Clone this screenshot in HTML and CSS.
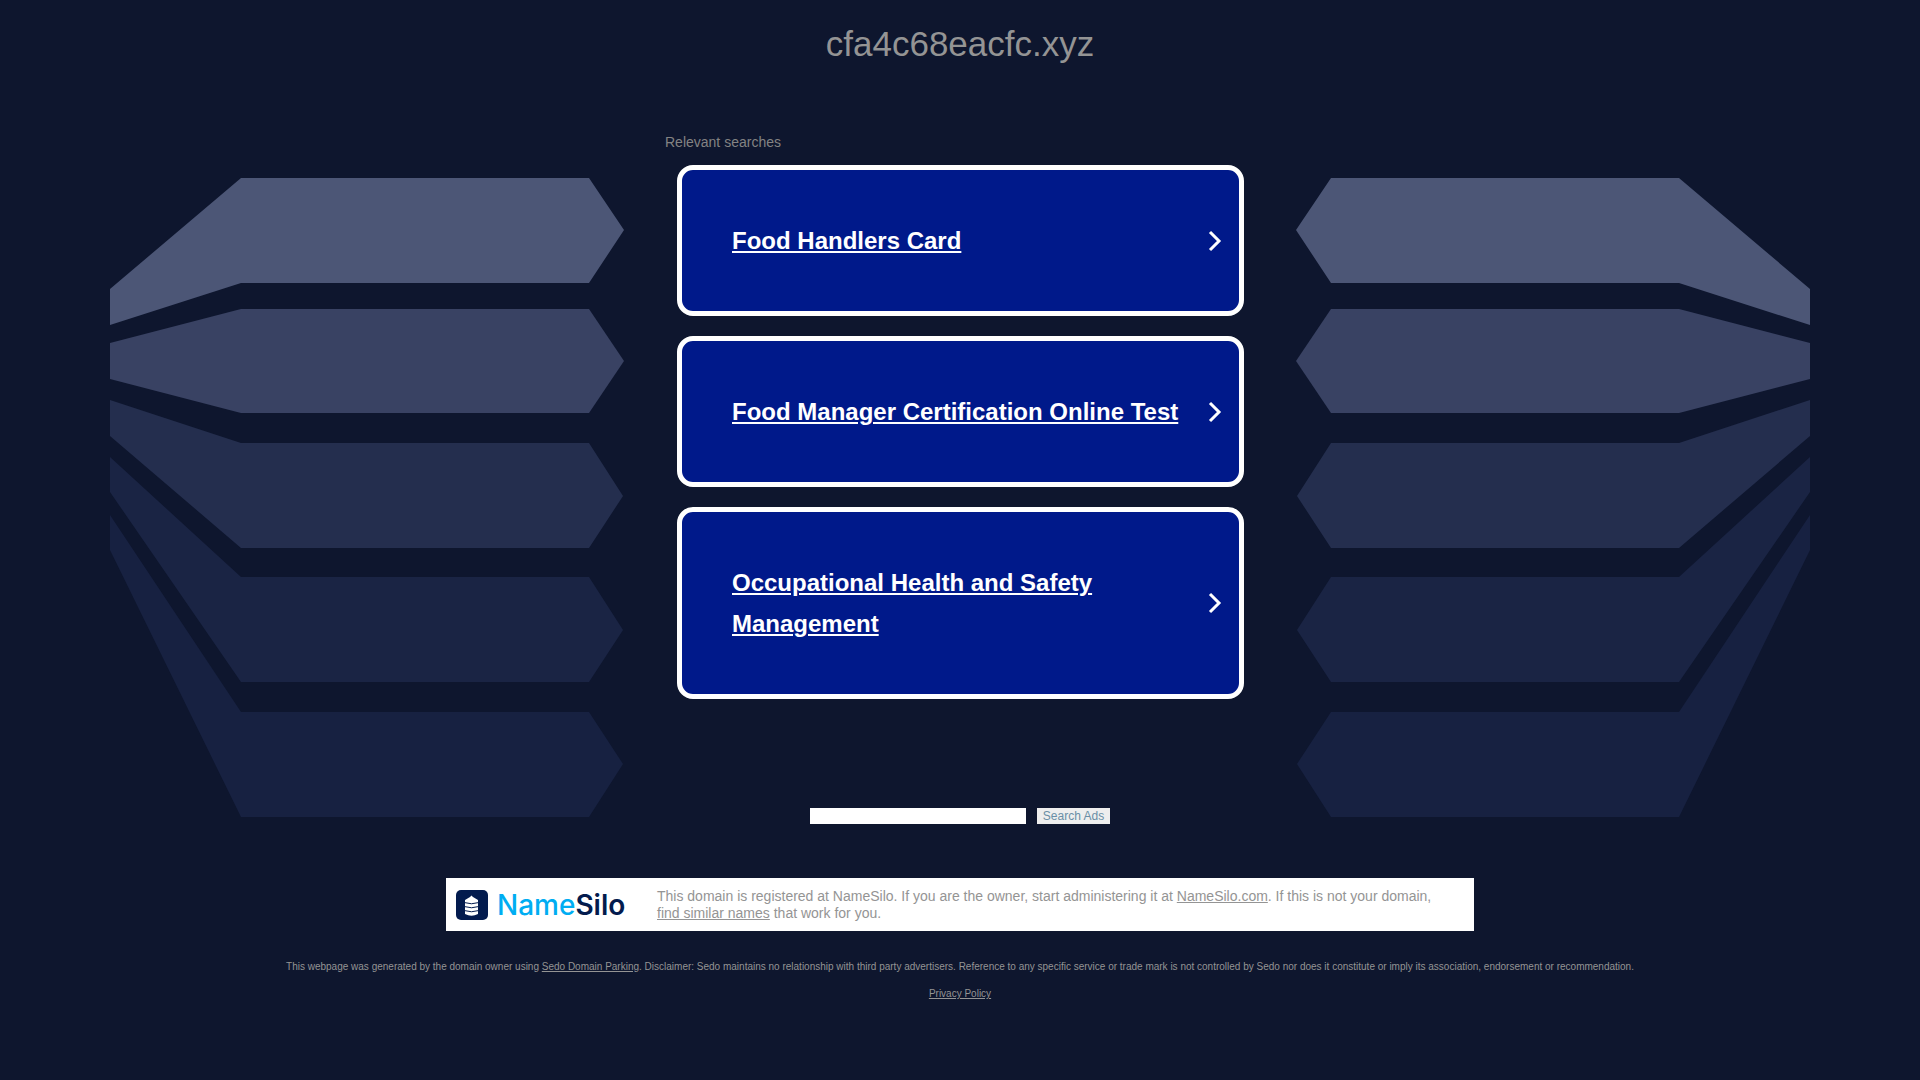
FILE: index.html
```
<!DOCTYPE html>
<html lang="en">
<head>
  <meta charset="UTF-8">
  <meta name="viewport" content="width=device-width, initial-scale=1.0">
  <title>cfa4c68eacfc.xyz</title>
  <link rel="stylesheet" href="styles.css">
</head>
<body>
  <header class="header">
    <h1>cfa4c68eacfc.xyz</h1>
  </header>

  <main class="container">
    <svg class="arrows" viewBox="0 0 514 639" aria-hidden="true">
      <polygon fill="#4c5676" points="0,111 131,0 479,0 514,52 479,105 131,105 0,147" />
      <polygon fill="#394263" points="0,165 131,131 479,131 514,183 479,235 131,235 0,201" />
      <polygon fill="#242e4e" points="0,222 131,265 479,265 513,318 479,370 131,370 0,258" />
      <polygon fill="#1a2444" points="0,279 131,399 479,399 513,452 479,504 131,504 0,314" />
      <polygon fill="#172141" points="0,337 131,534 479,534 513,586 479,639 131,639 0,372" />
    </svg>

    <div class="content">
      <section class="searches">
        <h2 class="searches-title">Relevant searches</h2>
        <ul class="cards">
          <li>
            <a class="card" href="#">
              <span class="card-text">Food Handlers Card</span>
              <svg class="chevron" viewBox="0 0 14 20" aria-hidden="true"><path d="M2 1l9 9-9 9" /></svg>
            </a>
          </li>
          <li>
            <a class="card" href="#">
              <span class="card-text">Food Manager Certification Online Test</span>
              <svg class="chevron" viewBox="0 0 14 20" aria-hidden="true"><path d="M2 1l9 9-9 9" /></svg>
            </a>
          </li>
          <li>
            <a class="card" href="#">
              <span class="card-text">Occupational Health and Safety Management</span>
              <svg class="chevron" viewBox="0 0 14 20" aria-hidden="true"><path d="M2 1l9 9-9 9" /></svg>
            </a>
          </li>
        </ul>
      </section>

      <form class="search-form">
        <input type="text" name="query" aria-label="Search Ads">
        <button type="submit">Search Ads</button>
      </form>
    </div>

    <svg class="arrows arrows-right" viewBox="0 0 514 639" aria-hidden="true">
      <polygon fill="#4c5676" points="0,111 131,0 479,0 514,52 479,105 131,105 0,147" />
      <polygon fill="#394263" points="0,165 131,131 479,131 514,183 479,235 131,235 0,201" />
      <polygon fill="#242e4e" points="0,222 131,265 479,265 513,318 479,370 131,370 0,258" />
      <polygon fill="#1a2444" points="0,279 131,399 479,399 513,452 479,504 131,504 0,314" />
      <polygon fill="#172141" points="0,337 131,534 479,534 513,586 479,639 131,639 0,372" />
    </svg>
  </main>

  <section class="registrar">
    <div class="logo">
      <svg class="logo-icon" viewBox="0 0 32 30" aria-hidden="true">
        <rect width="32" height="30" rx="5" fill="#031b4e" />
        <path fill="#fff" d="M9 10l5-3 1.500-1.500L17 7l5 3v14q-6.500 3.500-13 0z" />
        <path fill="none" stroke="#031b4e" d="M8 12.500q7.500 2.500 15 0M8 16.500q7.500 2.500 15 0M8 20.500q7.500 2.500 15 0" />
      </svg>
      <span class="logo-text"><span class="logo-name">Name</span>Silo</span>
    </div>
    <p>This domain is registered at NameSilo. If you are the owner, start administering it at <a href="#">NameSilo.com</a>. If this is not your domain, <a href="#">find similar names</a> that work for you.</p>
  </section>

  <footer class="footer">
    <p>This webpage was generated by the domain owner using <a href="#">Sedo Domain Parking</a>. Disclaimer: Sedo maintains no relationship with third party advertisers. Reference to any specific service or trade mark is not controlled by Sedo nor does it constitute or imply its association, endorsement or recommendation.</p>
    <p><a href="#">Privacy Policy</a></p>
  </footer>
</body>
</html>
```

FILE: styles.css
```
* {
  box-sizing: border-box;
}
body {
  margin: 0;
  background: #0e162e;
  color: #949494;
  font-family: Arial, "Liberation Sans", sans-serif;
}
h1, h2, p, ul {
  margin: 0;
  padding: 0;
  font-weight: normal;
}
a {
  color: inherit;
}
.header {
  padding: 24px 20px;
  text-align: center;
}
.header h1 {
  font-size: 35px;
  line-height: 40px;
}
.container {
  display: flex;
  justify-content: center;
  align-items: flex-start;
  gap: 41px;
  padding-top: 46px;
}
.arrows {
  flex: 0 1 514px;
  min-width: 0;
  margin-top: 44px;
}
.arrows-right {
  transform: scaleX(-1);
}
.content {
  flex: 0 0 590px;
}
.searches-title {
  color: #838383;
  font-size: 14px;
  line-height: 16px;
}
.cards {
  display: flex;
  flex-direction: column;
  gap: 20px;
  padding: 15px 11px 0 12px;
  list-style: none;
}
.card {
  display: flex;
  align-items: center;
  padding: 50px 17px 50px 50px;
  background: #00198a;
  border: 5px solid #fff;
  border-radius: 16px;
  color: #fff;
  font-size: 24px;
  font-weight: bold;
  line-height: 41px;
}
.card-text {
  flex: 1;
}
.chevron {
  width: 14px;
  height: 20px;
  overflow: visible;
  fill: none;
  stroke: #fff;
  stroke-width: 3;
}
.search-form {
  display: flex;
  justify-content: center;
  gap: 11px;
  margin-top: 109px;
}
.search-form input {
  width: 216px;
  height: 16px;
  padding: 0 4px;
  border: none;
  background: #fff;
  font-size: 12px;
}
.search-form button {
  width: 73px;
  height: 16px;
  padding: 0;
  border: none;
  background: #eee;
  color: #6a8ea6;
  font-family: inherit;
  font-size: 12px;
  line-height: 16px;
  cursor: pointer;
}
.registrar {
  display: flex;
  align-items: center;
  max-width: 1028px;
  margin: 54px auto 0;
  padding: 10px 20px 9px 10px;
  background: #fff;
  font-size: 14px;
  line-height: 17px;
}
.registrar p {
  padding-right: 10px;
}
.logo {
  display: flex;
  flex: 0 0 201px;
  align-items: center;
  gap: 9px;
}
.logo-icon {
  width: 32px;
  height: 30px;
}
.logo-text {
  color: #031b4e;
  font-family: Inter, sans-serif;
  font-size: 28px;
  font-weight: 600;
  line-height: 34px;
}
.logo-name {
  color: #00adf2;
  font-weight: 500;
}
.footer {
  padding: 30px 20px;
  font-size: 10px;
  line-height: 12px;
  text-align: center;
}
.footer p + p {
  margin-top: 15px;
}
```
